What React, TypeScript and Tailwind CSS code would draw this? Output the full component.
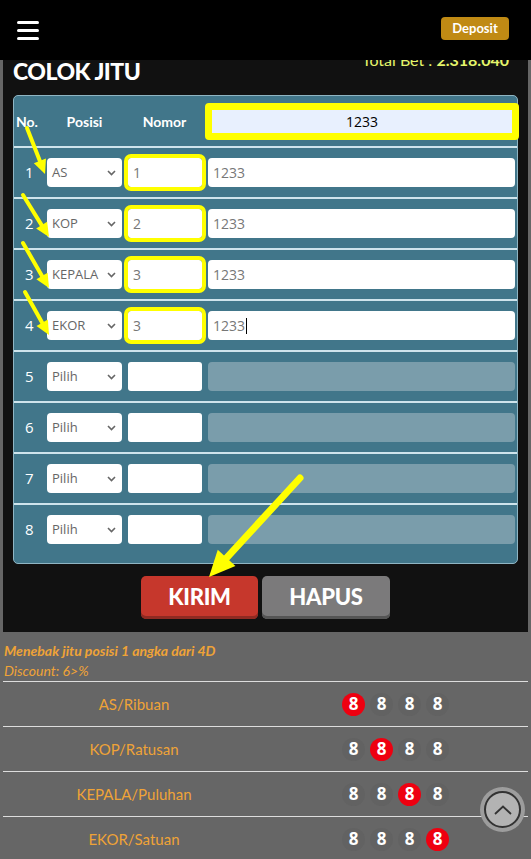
import React from 'react';

const ROWS = [
  { n: 1, pos: 'AS', nomor: '1', val: '1233', on: true },
  { n: 2, pos: 'KOP', nomor: '2', val: '1233', on: true },
  { n: 3, pos: 'KEPALA', nomor: '3', val: '1233', on: true },
  { n: 4, pos: 'EKOR', nomor: '3', val: '1233', on: true, caret: true },
  { n: 5, pos: 'Pilih', nomor: '', val: '', on: false },
  { n: 6, pos: 'Pilih', nomor: '', val: '', on: false },
  { n: 7, pos: 'Pilih', nomor: '', val: '', on: false },
  { n: 8, pos: 'Pilih', nomor: '', val: '', on: false },
];

const INFO = [
  { label: 'AS/Ribuan', hit: 0 },
  { label: 'KOP/Ratusan', hit: 1 },
  { label: 'KEPALA/Puluhan', hit: 2 },
  { label: 'EKOR/Satuan', hit: 3 },
];

const ARROWS = [
  { x1: 27, y1: 128, x2: 45, y2: 174, w: 4, hl: 14, hw: 13 },
  { x1: 23, y1: 195, x2: 49, y2: 237, w: 4, hl: 14, hw: 13 },
  { x1: 23, y1: 243, x2: 49, y2: 288, w: 4, hl: 14, hw: 13 },
  { x1: 25, y1: 292, x2: 49, y2: 335, w: 4, hl: 14, hw: 13 },
  { x1: 300, y1: 478, x2: 209, y2: 577, w: 7, hl: 26, hw: 24 },
];

function Arrow({ x1, y1, x2, y2, w, hl, hw }: (typeof ARROWS)[number]) {
  const len = Math.hypot(x2 - x1, y2 - y1);
  const ux = (x2 - x1) / len;
  const uy = (y2 - y1) / len;
  const bx = x2 - ux * hl;
  const by = y2 - uy * hl;
  const px = -uy * (hw / 2);
  const py = ux * (hw / 2);
  return (
    <g>
      <line x1={x1} y1={y1} x2={bx} y2={by} stroke="#ffff00" strokeWidth={w} strokeLinecap="round" />
      <polygon points={`${x2},${y2} ${bx + px},${by + py} ${bx - px},${by - py}`} fill="#ffff00" />
    </g>
  );
}

function Chevron() {
  return (
    <svg width="9" height="6" viewBox="0 0 9 6" className="shrink-0">
      <path d="M1 1l3.5 3.5L8 1" fill="none" stroke="#666" strokeWidth="1.6" />
    </svg>
  );
}

export default function App() {
  return (
    <div className="relative min-h-[859px] overflow-hidden bg-[#666666]" style={{ fontFamily: 'Lato, "Open Sans", sans-serif' }}>
      {/* top bar */}
      <header className="relative z-10 flex h-[60px] items-center justify-between bg-black pl-[17px] pr-[22px]">
        <div className="flex w-[22px] flex-col gap-[5px] pt-[1px]">
          <span className="h-[3px] rounded-full bg-white" />
          <span className="h-[3px] rounded-full bg-white" />
          <span className="h-[3px] rounded-full bg-white" />
        </div>
        <button className="mt-[-3px] h-[23px] w-[68px] rounded-[4px] bg-[#c08a14] text-[13px] font-bold text-white">
          Deposit
        </button>
      </header>

      {/* form panel */}
      <section className="mx-[3px] bg-[#111111] pb-[13px]">
        <div className="flex h-[35px] items-start justify-between pl-[10px] pr-[19px]">
          <h1 className="mt-[-4px] text-[23px] font-black leading-[30px] tracking-[-0.5px] text-white">COLOK JITU</h1>
          <div className="mt-[-12px] text-[16px] leading-[24px] text-[#e5f56b]">
            Total Bet : <span className="font-bold">2.318.040</span>
          </div>
        </div>

        <div className="mx-[10px] rounded-[5px] border border-[#8fb5c3] bg-[#41768a] pb-[9px]" style={{ fontFamily: '"Open Sans", sans-serif' }}>
          <div className="flex h-[50px] items-center text-[14px] font-bold text-white" style={{ fontFamily: 'Lato, sans-serif' }}>
            <div className="w-[33px] pl-[2px]">No.</div>
            <div className="w-[75px] text-center">Posisi</div>
            <div className="ml-[5px] w-[75px] text-center">Nomor</div>
            <div className="ml-[3px] mr-[-2px] flex h-[37px] flex-1 items-center justify-center rounded-[4px] border-[7px] border-[#ffff00] bg-[#e8f0fe] text-[14px] font-normal text-black" style={{ fontFamily: '"Open Sans", sans-serif' }}>
              1233
            </div>
          </div>

          {ROWS.map((r) => (
            <div key={r.n} className="flex h-[51px] items-center border-t-2 border-[#cfe4ec]">
              <div className="w-[33px] pl-[11px] text-[15px] text-white">{r.n}</div>
              <div className="flex h-[29px] w-[75px] items-center justify-between rounded-[4px] bg-white pl-[5px] pr-[6px] text-[13px] text-[#666]">
                <span>{r.pos}</span>
                <Chevron />
              </div>
              <div
                className={`ml-[6px] flex h-[29px] w-[74px] items-center rounded-[3px] bg-white pl-[5px] text-[14px] text-[#777] ${
                  r.on ? 'outline-[4px] outline-[#ffff00] outline-solid' : ''
                }`}
              >
                {r.nomor}
              </div>
              <div
                className={`ml-[6px] mr-[2px] flex h-[29px] flex-1 items-center rounded-[4px] pl-[5px] text-[14px] text-[#777] ${
                  r.on ? 'bg-white' : 'bg-[#7a9dab]'
                }`}
              >
                {r.val}
                {r.caret && <span className="ml-[1px] h-[16px] w-[1px] bg-black" />}
              </div>
            </div>
          ))}
        </div>

        <div className="mt-[12px] flex justify-center gap-[4px]">
          <button className="h-[43px] w-[117px] rounded-[5px] bg-[#c6372c] pb-[3px] text-[22px] font-black tracking-[-0.3px] text-white shadow-[inset_0_-3px_0_#8f2a22]">
            KIRIM
          </button>
          <button className="h-[43px] w-[128px] rounded-[5px] bg-[#7b7a7b] pb-[3px] text-[22px] font-black tracking-[-0.3px] text-white shadow-[inset_0_-3px_0_#555]">
            HAPUS
          </button>
        </div>
      </section>

      {/* info */}
      <section className="mx-[3px] pt-[9px] text-[#efa337]">
        <p className="pl-[1px] text-[14px] font-bold italic leading-[20px]">Menebak jitu posisi 1 angka dari 4D</p>
        <p className="pl-[1px] text-[14px] italic leading-[20px]">Discount: 6&gt;%</p>
        {INFO.map((row) => (
          <div key={row.label} className="flex h-[45px] items-center border-t border-[#dddddd]">
            <div className="w-[262px] text-center text-[15px]">{row.label}</div>
            <div className="flex flex-1 justify-center gap-[5px] pr-[2px]">
              {[0, 1, 2, 3].map((i) => (
                <span
                  key={i}
                  className={`flex h-[23px] w-[23px] items-center justify-center rounded-full text-[17px] font-bold text-white ${
                    i === row.hit ? 'bg-[#ee0010]' : 'bg-[#626262]'
                  }`}
                  style={{ fontFamily: '"Open Sans", sans-serif' }}
                >
                  8
                </span>
              ))}
            </div>
          </div>
        ))}
      </section>

      {/* back to top */}
      <button className="fixed bottom-[27px] right-[6px] flex h-[45px] w-[45px] items-center justify-center rounded-full bg-[#9d9d9d]">
        <span className="flex h-[37px] w-[37px] items-center justify-center rounded-full border-2 border-[#333] bg-[#b3b3b3]">
          <svg width="20" height="12" viewBox="0 0 20 12">
            <path d="M2 10L10 2.5 18 10" fill="none" stroke="#333" strokeWidth="1.8" />
          </svg>
        </span>
      </button>

      {/* annotation arrows */}
      <svg className="pointer-events-none absolute left-0 top-0 z-20" width="531" height="859">
        {ARROWS.map((a, i) => (
          <Arrow key={i} {...a} />
        ))}
      </svg>
    </div>
  );
}
